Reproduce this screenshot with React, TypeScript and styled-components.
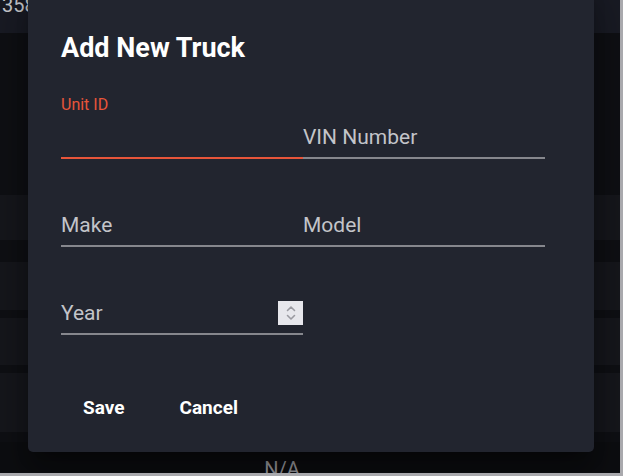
import { createGlobalStyle, styled } from "styled-components";

const GlobalStyle = createGlobalStyle`
  html, body {
    margin: 0;
    padding: 0;
    background: #a9a9ad;
  }
  body {
    font-family: Roboto, "Noto Sans", "Liberation Sans", sans-serif;
  }
`;

const Screen = styled.div`
  position: relative;
  width: 620px;
  height: 473px;
  overflow: hidden;
  background: #0e0f13;
`;

const Header = styled.div`
  height: 38px;
  padding-left: 2px;
  background: #181a23;
  color: #c4c5ca;
  font-size: 20px;
  line-height: 20px;
`;

const HeaderCell = styled.div`
  margin-top: -5px;
`;

const Row = styled.div<{ $h: number; $tone: "base" | "row" | "deep" }>`
  height: ${(p) => p.$h}px;
  background: ${(p) =>
    p.$tone === "row" ? "#15161b" : p.$tone === "deep" ? "#0c0d10" : "#0e0f13"};
  display: flex;
  justify-content: center;
  color: #9c9ca1;
  font-size: 20px;
  line-height: 24px;
`;

const NACell = styled.div`
  margin-top: 15px;
  margin-left: -56px;
`;

const Dialog = styled.div`
  position: absolute;
  left: 28px;
  top: -20px;
  width: 566px;
  box-sizing: border-box;
  height: 472px;
  padding: 53px 33px 0;
  background: #22252f;
  border-radius: 5px;
  box-shadow: 0 11px 15px -7px rgba(0, 0, 0, 0.4),
    0 24px 38px 3px rgba(0, 0, 0, 0.3);
`;

const Title = styled.h2`
  margin: 0;
  color: #ffffff;
  font-size: 27px;
  font-weight: 700;
  line-height: 30px;
`;

const Form = styled.div`
  margin-top: 32px;
  display: grid;
  grid-template-columns: 242px 242px;
  row-gap: 24px;
`;

const Field = styled.div<{ $focused?: boolean }>`
  display: flex;
  flex-direction: column;
  border-bottom: 2px solid ${(p) => (p.$focused ? "#e8553a" : "#86878d")};
`;

const FieldLabel = styled.div<{ $show?: boolean }>`
  height: 20px;
  margin-bottom: 8px;
  font-size: 16px;
  line-height: 20px;
  color: #e8553a;
  visibility: ${(p) => (p.$show ? "visible" : "hidden")};
`;

const InputRow = styled.div`
  display: flex;
  align-items: center;
  height: 28px;
  padding-bottom: 6px;
`;

const Placeholder = styled.div`
  flex: 1;
  font-size: 21px;
  line-height: 28px;
  color: #c3c4c9;
`;

const Spinner = styled.div`
  width: 25px;
  height: 24px;
  background: #e7e7ec;
  display: flex;
  align-items: center;
  justify-content: center;
`;

const Actions = styled.div`
  margin-top: 53px;
  margin-left: 11px;
  display: flex;
  gap: 33px;
`;

const TextButton = styled.button`
  background: none;
  border: none;
  padding: 8px 11px;
  color: #ffffff;
  font-family: inherit;
  font-size: 19px;
  font-weight: 700;
  line-height: 24px;
  cursor: pointer;
`;

const rows: { h: number; tone: "base" | "row" | "deep" }[] = [
  { h: 162, tone: "base" },
  { h: 45, tone: "row" },
  { h: 22, tone: "base" },
  { h: 48, tone: "row" },
  { h: 8, tone: "base" },
  { h: 47, tone: "row" },
  { h: 8, tone: "base" },
  { h: 59, tone: "row" },
  { h: 10, tone: "base" },
];

export default function App() {
  return (
    <>
      <GlobalStyle />
      <Screen>
        <Header>
          <HeaderCell>358</HeaderCell>
        </Header>
        {rows.map((r, i) => (
          <Row key={i} $h={r.h} $tone={r.tone} />
        ))}
        <Row $h={30} $tone="deep">
          <NACell>N/A</NACell>
        </Row>

        <Dialog>
          <Title>Add New Truck</Title>
          <Form>
            <Field $focused>
              <FieldLabel $show>Unit ID</FieldLabel>
              <InputRow>
                <Placeholder />
              </InputRow>
            </Field>
            <Field>
              <FieldLabel />
              <InputRow>
                <Placeholder>VIN Number</Placeholder>
              </InputRow>
            </Field>
            <Field>
              <FieldLabel />
              <InputRow>
                <Placeholder>Make</Placeholder>
              </InputRow>
            </Field>
            <Field>
              <FieldLabel />
              <InputRow>
                <Placeholder>Model</Placeholder>
              </InputRow>
            </Field>
            <Field>
              <FieldLabel />
              <InputRow>
                <Placeholder>Year</Placeholder>
                <Spinner>
                  <svg width="12" height="18" viewBox="0 0 12 18" fill="none">
                    <path
                      d="M2.5 6.5 L6 3 L9.5 6.5"
                      stroke="#9a9aa1"
                      strokeWidth="1.6"
                      strokeLinecap="round"
                      strokeLinejoin="round"
                    />
                    <path
                      d="M2.5 11.5 L6 15 L9.5 11.5"
                      stroke="#9a9aa1"
                      strokeWidth="1.6"
                      strokeLinecap="round"
                      strokeLinejoin="round"
                    />
                  </svg>
                </Spinner>
              </InputRow>
            </Field>
          </Form>
          <Actions>
            <TextButton>Save</TextButton>
            <TextButton>Cancel</TextButton>
          </Actions>
        </Dialog>
      </Screen>
    </>
  );
}
